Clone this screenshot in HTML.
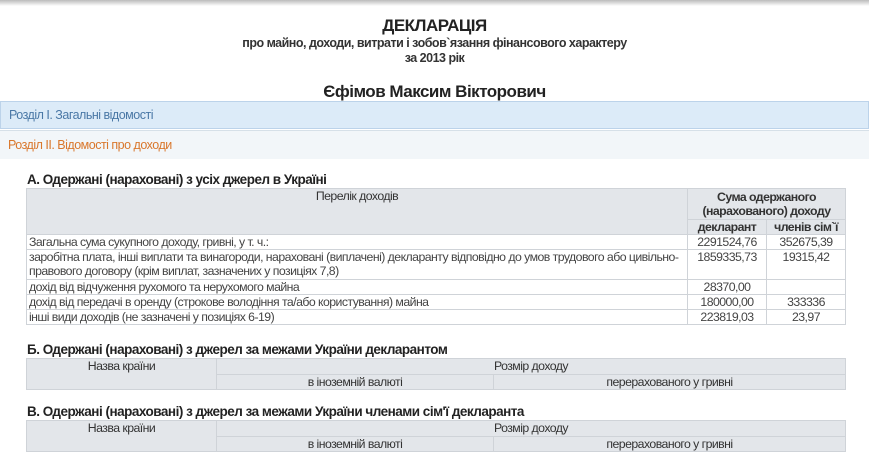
<!DOCTYPE html>
<html><head><meta charset="utf-8"><style>
body{margin:0;width:869px;height:461px;overflow:hidden;background:#fff;font-family:"Liberation Sans",sans-serif;color:#333;position:relative}
.shadow{position:absolute;left:0;top:0;width:869px;height:6px;background:linear-gradient(#bbb,#fff)}
.c{position:absolute;left:0;width:869px;text-align:center;font-weight:bold;letter-spacing:-0.5px}
.bar{position:absolute;left:0;width:869px;box-sizing:border-box;font-size:12.5px;letter-spacing:-0.5px;padding-left:8px}
h3{position:absolute;left:27px;margin:0;font-size:13.5px;letter-spacing:-0.5px;color:#222}
table{position:absolute;left:26px;width:820px;border-collapse:collapse;font-size:12.3px;letter-spacing:-0.55px;color:#444}
td,th{border:1px solid #cfd3d8;padding:0 2px;line-height:14px;vertical-align:top}
th{background:#e3e6ea;font-weight:bold;color:#333;text-align:center}
td.n{text-align:center}
</style></head><body>
<div class="shadow"></div>
<div class="c" style="top:16px;font-size:17px;color:#222">ДЕКЛАРАЦІЯ</div>
<div class="c" style="top:36px;font-size:12.5px">про майно, доходи, витрати і зобов`язання фінансового характеру</div>
<div class="c" style="top:51px;font-size:12.5px">за 2013 рік</div>
<div class="c" style="top:82px;font-size:17px;color:#222">Єфімов Максим Вікторович</div>
<div class="bar" style="top:101px;height:28px;line-height:27px;background:#dcebf8;border:1px solid #bcd3ea;color:#4a78a6">Розділ I. Загальні відомості</div>
<div class="bar" style="top:130px;height:29px;line-height:28px;background:#f2f6f9;border-top:1px solid #d6e0e8;color:#d9772c">Розділ II. Відомості про доходи</div>
<h3 style="top:172px">А. Одержані (нараховані) з усіх джерел в Україні</h3>
<table style="top:188px">
<tr><th rowspan="2" style="font-weight:normal;height:30px">Перелік доходів</th><th colspan="2" style="width:151px;padding:1px 0">Сума одержаного<br>(нарахованого) доходу</th></tr>
<tr><th style="width:74px">декларант</th><th style="width:74px">членів сім`ї</th></tr>
<tr><td>Загальна сума сукупного доходу, гривні, у т. ч.:</td><td class="n">2291524,76</td><td class="n">352675,39</td></tr>
<tr><td style="height:29px">заробітна плата, інші виплати та винагороди, нараховані (виплачені) декларанту відповідно до умов трудового або цивільно-правового договору (крім виплат, зазначених у позиціях 7,8)</td><td class="n">1859335,73</td><td class="n">19315,42</td></tr>
<tr><td>дохід від відчуження рухомого та нерухомого майна</td><td class="n">28370,00</td><td class="n"></td></tr>
<tr><td>дохід від передачі в оренду (строкове володіння та/або користування) майна</td><td class="n">180000,00</td><td class="n">333336</td></tr>
<tr><td>інші види доходів (не зазначені у позиціях 6-19)</td><td class="n">223819,03</td><td class="n">23,97</td></tr>
</table>
<h3 style="top:342px">Б. Одержані (нараховані) з джерел за межами України декларантом</h3>
<table style="top:358px">
<tr><th rowspan="2" style="width:185px;font-weight:normal;height:30px">Назва країни</th><th colspan="2" style="font-weight:normal">Розмір доходу</th></tr>
<tr><th style="width:272px;font-weight:normal">в іноземній валюті</th><th style="font-weight:normal">перерахованого у гривні</th></tr>
</table>
<h3 style="top:404px">В. Одержані (нараховані) з джерел за межами України членами сім'ї декларанта</h3>
<table style="top:420px">
<tr><th rowspan="2" style="width:185px;font-weight:normal;height:30px">Назва країни</th><th colspan="2" style="font-weight:normal">Розмір доходу</th></tr>
<tr><th style="width:272px;font-weight:normal">в іноземній валюті</th><th style="font-weight:normal">перерахованого у гривні</th></tr>
</table>
</body></html>
